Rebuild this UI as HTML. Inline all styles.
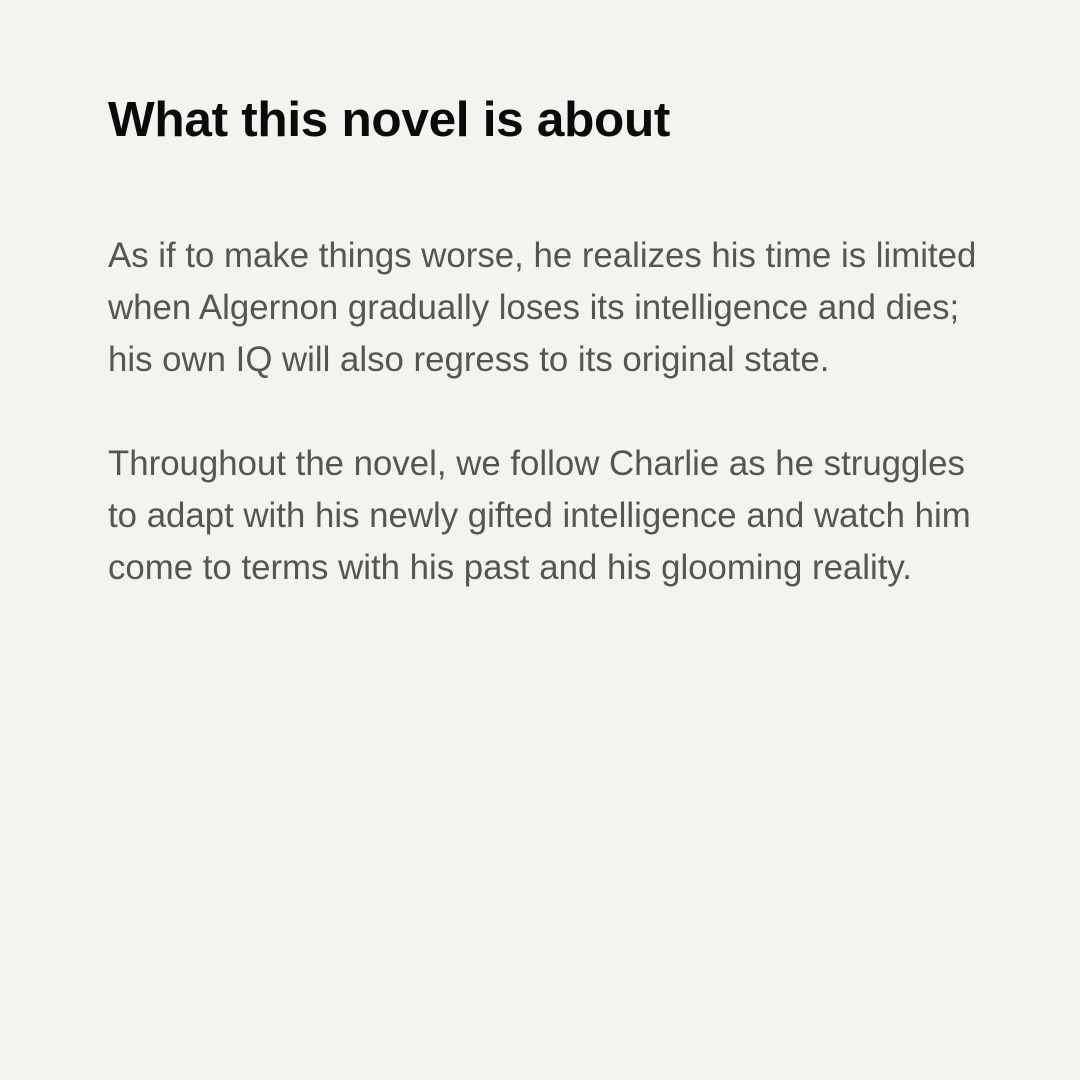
<!DOCTYPE html>
<html><head><meta charset="utf-8"><style>
html,body{margin:0;padding:0}
body{width:1080px;height:1080px;background:#f4f3f0;position:relative;overflow:hidden;font-family:"Liberation Sans",sans-serif}
h1{position:absolute;left:108px;top:92px;margin:0;font-size:49.5px;font-weight:bold;color:#0a0a0a;letter-spacing:-0.3px;white-space:nowrap;line-height:1.15}
.l{position:absolute;left:108px;font-size:34.8px;color:#555553;white-space:nowrap;line-height:1}
</style></head><body>
<h1>What this novel is about</h1>
<div class="l" style="top:239px">As if to make things worse, he realizes his time is limited</div>
<div class="l" style="top:291px">when Algernon gradually loses its intelligence and dies;</div>
<div class="l" style="top:343px">his own IQ will also regress to its original state.</div>
<div class="l" style="top:447px">Throughout the novel, we follow Charlie as he struggles</div>
<div class="l" style="top:499px">to adapt with his newly gifted intelligence and watch him</div>
<div class="l" style="top:551px">come to terms with his past and his glooming reality.</div>
</body></html>
